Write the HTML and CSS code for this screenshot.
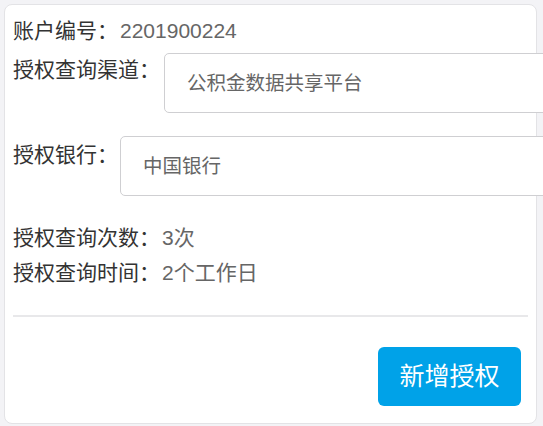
FILE: index.html
```html
<!DOCTYPE html>
<html lang="zh-CN">
<head>
    <meta charset="UTF-8">
    <title>授权信息</title>
    <link rel="stylesheet" href="styles.css">
</head>
<body>
<div class="card">
    <div class="row">
        <span class="label">账户编号：</span><span class="value">2201900224</span>
    </div>
    <div class="row-field first">
        <span class="label">授权查询渠道：</span>
        <div class="field">公积金数据共享平台</div>
    </div>
    <div class="row-field second">
        <span class="label">授权银行：</span>
        <div class="field">中国银行</div>
    </div>
    <div class="info">
        <div class="row"><span class="label">授权查询次数：</span><span class="value">3次</span></div>
        <div class="row"><span class="label">授权查询时间：</span><span class="value">2个工作日</span></div>
    </div>
    <div class="line"></div>
    <div class="btns">
        <span class="btn">新增授权</span>
    </div>
</div>
</body>
</html>
```

FILE: styles.css
```css
html, body {
    margin: 0;
    padding: 0;
    overflow: hidden;
}
body {
    background: #f3f3f6;
    font-family: "Liberation Sans", "Microsoft YaHei", "Noto Sans CJK SC", sans-serif;
    font-size: 21px;
    color: #333;
}
.card {
    margin: 4px;
    width: 515px;
    height: 402px;
    padding: 8px;
    background: #fff;
    border: 1px solid #e3e3e6;
    border-radius: 8px;
}
.row {
    line-height: 35px;
}
.label {
    color: #333;
}
.value {
    color: #666;
    margin-left: 2px;
}
.row-field {
    display: flex;
    align-items: flex-start;
}
.row-field .label {
    line-height: 34px;
    flex-shrink: 0;
}
.row-field.first {
    margin-top: 5px;
}
.row-field.first .field {
    margin-left: 4px;
}
.row-field.second {
    margin-top: 23px;
}
.row-field.second .label {
    padding-top: 2px;
}
.field {
    flex-shrink: 0;
    width: 420px;
    height: 58px;
    line-height: 58px;
    margin-left: 2px;
    padding-left: 22px;
    border: 1px solid #cfcfd2;
    border-radius: 5px;
    font-size: 19.5px;
    color: #666;
    background: #fff;
}
.info {
    margin-top: 24px;
}
.line {
    margin-top: 25px;
    height: 2px;
    background: #e8e8ea;
}
.btns {
    display: flex;
    justify-content: flex-end;
    margin-top: 30px;
    padding-right: 7px;
}
.btn {
    display: block;
    width: 143px;
    height: 59px;
    line-height: 59px;
    text-align: center;
    background: #00a2e8;
    color: #fff;
    font-size: 25px;
    border-radius: 6px;
}
```
